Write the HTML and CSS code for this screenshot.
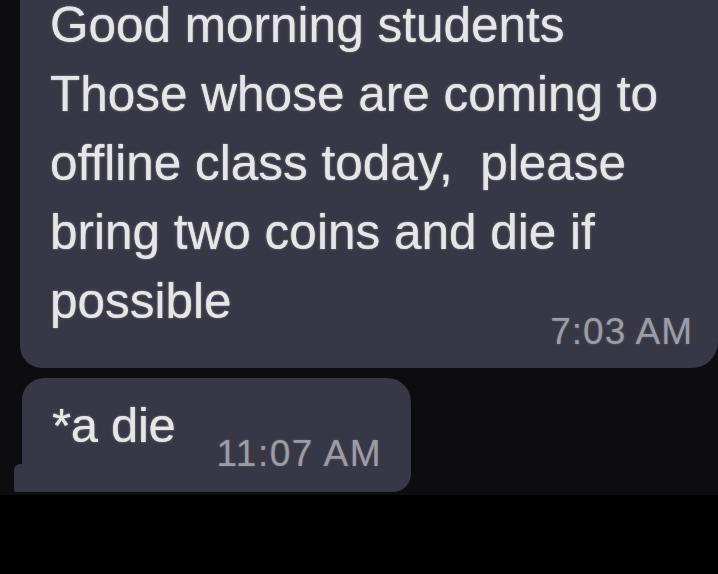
FILE: index.html
```html
<!DOCTYPE html>
<html>
<head>
<meta charset="utf-8">
<link rel="stylesheet" href="styles.css">
</head>
<body>
<div class="chat">
  <div class="bubble bubble-main">
    <div class="msg">Good morning students<br>Those whose are coming to<br>offline class today,&nbsp; please<br>bring two coins and die if<br>possible</div>
    <div class="time time-main">7:03 AM</div>
  </div>
  <div class="bubble bubble-fix">
    <div class="msg-short">*a die</div>
    <div class="time time-fix">11:07 AM</div>
  </div>
</div>
<div class="footer"></div>
</body>
</html>
```

FILE: styles.css
```css
html, body {
  margin: 0;
  padding: 0;
  background: #000;
}
body {
  width: 718px;
  height: 574px;
  overflow: hidden;
  font-family: "Liberation Sans", Arial, sans-serif;
}
.chat {
  height: 495px;
  background: #0d0d11;
  padding-left: 20px;
  display: flex;
  flex-direction: column;
  align-items: flex-start;
  box-sizing: border-box;
}
.bubble {
  background: #383745;
  color: #e6e6e9;
  box-sizing: border-box;
}
.bubble-main {
  width: 698px;
  height: 368px;
  border-radius: 0 0 26px 22px;
  padding: 0 25px 0 30px;
  display: flex;
  flex-direction: column;
}
.msg {
  font-size: 49.5px;
  line-height: 69px;
  margin-top: -10px;
  white-space: nowrap;
  text-shadow: 0 0 1px rgba(255,255,255,0.6), 0 0 3px rgba(255,255,255,0.25);
}
.time {
  font-size: 37px;
  line-height: 1;
  color: #9c9ca4;
  white-space: nowrap;
  text-shadow: 0 0 2px rgba(200,200,210,0.3);
}
.time-main {
  align-self: flex-end;
  margin-top: -22px;
  letter-spacing: 1px;
}
.bubble-fix {
  position: relative;
  margin-top: 10px;
  margin-left: 2px;
  height: 114px;
  border-radius: 22px 24px 18px 6px;
  padding: 23px 29px 0 30px;
  display: flex;
  align-items: flex-start;
}
.bubble-fix::before {
  content: "";
  position: absolute;
  left: -8px;
  bottom: 0;
  width: 20px;
  height: 28px;
  background: #383745;
  border-radius: 6px 0 0 2px;
}
.msg-short {
  font-size: 49px;
  line-height: 1;
  letter-spacing: -0.3px;
  white-space: nowrap;
  text-shadow: 0 0 1px rgba(255,255,255,0.6), 0 0 3px rgba(255,255,255,0.25);
}
.time-fix {
  margin-top: 34px;
  margin-left: 41px;
  letter-spacing: 1.5px;
}
.footer {
  height: 79px;
  background: #000;
}
```
